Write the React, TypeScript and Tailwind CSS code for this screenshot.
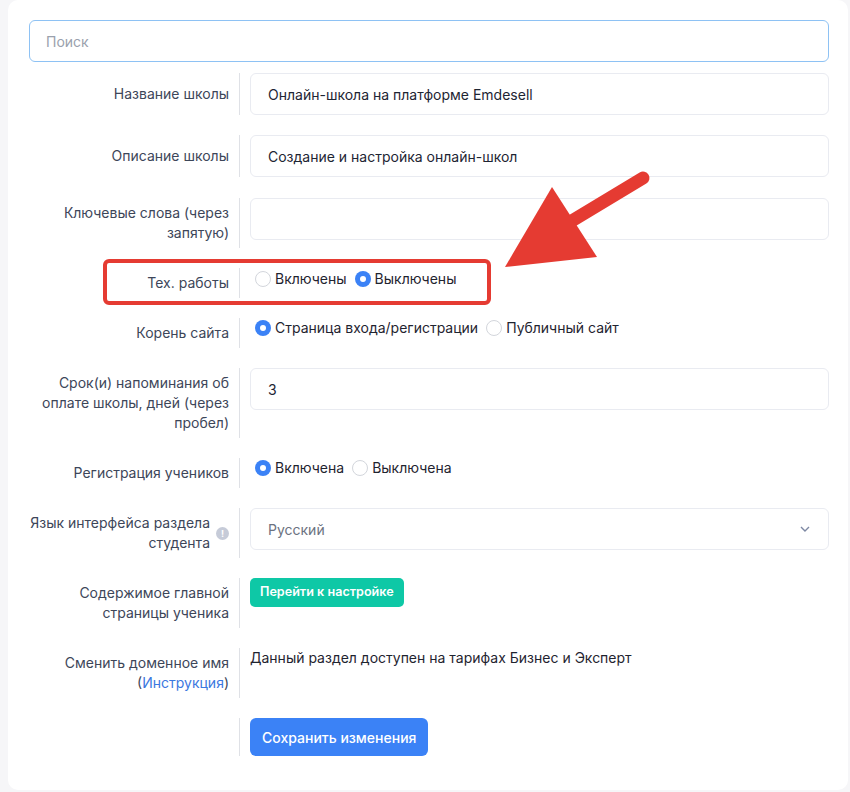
import { ReactNode } from 'react';

function Row({
  label,
  children,
  fieldClass = 'pl-[10px]',
  className = 'mt-5',
}: {
  label?: ReactNode;
  children: ReactNode;
  fieldClass?: string;
  className?: string;
}) {
  return (
    <div className={`flex ${className}`}>
      <div className="w-[211px] shrink-0 min-h-[30px] border-r border-[#dfe1e6] pr-[10px] py-[5px] flex items-center justify-end text-right text-[14px] leading-[20px] text-[#3d4659]">
        {label}
      </div>
      <div className={`flex-1 ${fieldClass}`}>{children}</div>
    </div>
  );
}

function TextField({ value }: { value: string }) {
  return (
    <div className="h-[42px] rounded-md border border-[#e9ebf1] bg-white px-[17px] flex items-center text-[14px] text-[#1e2533]">
      {value}
    </div>
  );
}

function Radio({ checked, label }: { checked?: boolean; label: string }) {
  return (
    <span className="flex items-center gap-[4px] mr-[8px] h-[20px]">
      {checked ? (
        <span className="w-[16px] h-[16px] rounded-full bg-[#3b82f6] flex items-center justify-center">
          <span className="w-[6px] h-[6px] rounded-full bg-white" />
        </span>
      ) : (
        <span className="w-[16px] h-[16px] rounded-full border border-[#d3d6dc] bg-white" />
      )}
      <span className="text-[14px] leading-[20px] text-[#1f2430]">{label}</span>
    </span>
  );
}

export default function App() {
  return (
    <div
      className="relative min-h-[792px] bg-[#f6f6f8] pl-2 pr-[2px] pb-[2px]"
      style={{ fontFamily: 'Inter, "Noto Sans", sans-serif' }}
    >
      <div className="bg-white rounded-[10px] pl-[21px] pr-[19px] pt-5 pb-[34px] min-h-[790px]">
        <div className="h-[42px] rounded-md border border-[#8ec2f4] flex items-center px-4 text-[14px] text-[#9aa1ad] mb-[11px]">
          Поиск
        </div>

        <Row label="Название школы" className="">
          <TextField value="Онлайн-школа на платформе Emdesell" />
        </Row>
        <Row label="Описание школы">
          <TextField value="Создание и настройка онлайн-школ" />
        </Row>
        <Row label="Ключевые слова (через запятую)" className="mt-[21px]">
          <TextField value="" />
        </Row>
        <Row label="Тех. работы" fieldClass="flex items-start pt-[1px] pl-[15px]">
          <Radio label="Включены" />
          <Radio checked label="Выключены" />
        </Row>
        <Row label="Корень сайта" fieldClass="flex items-start pl-[15px]">
          <Radio checked label="Страница входа/регистрации" />
          <Radio label="Публичный сайт" />
        </Row>
        <Row label="Срок(и) напоминания об оплате школы, дней (через пробел)">
          <TextField value="3" />
        </Row>
        <Row label="Регистрация учеников" fieldClass="flex items-start pl-[15px]">
          <Radio checked label="Включена" />
          <Radio label="Выключена" />
        </Row>
        <Row
          label={
            <span className="flex items-center gap-[6px]">
              <span>
                Язык интерфейса раздела
                <br />
                студента
              </span>
              <span className="w-[13px] h-[13px] rounded-full bg-[#c6cbd8] text-white text-[9px] font-bold leading-none flex items-center justify-center">
                !
              </span>
            </span>
          }
        >
          <div className="h-[42px] rounded-md border border-[#e9ebf1] bg-white pl-[17px] pr-[18px] flex items-center justify-between text-[14px] text-[#6b7280]">
            <span>Русский</span>
            <svg width="10" height="6" viewBox="0 0 10 6" fill="none">
              <path d="M1 1l4 4 4-4" stroke="#7d88a3" strokeWidth="1.4" />
            </svg>
          </div>
        </Row>
        <Row label="Содержимое главной страницы ученика">
          <button className="h-[29px] px-[10px] rounded-[5px] bg-[#0ec8a6] text-white text-[12.6px] font-semibold">
            Перейти к настройке
          </button>
        </Row>
        <Row
          label={
            <span>
              Сменить доменное имя
              <br />(<span className="text-[#3b78e0]">Инструкция</span>)
            </span>
          }
        >
          <div className="text-[14px] leading-[20px] text-[#1f2430]">
            Данный раздел доступен на тарифах Бизнес и Эксперт
          </div>
        </Row>
        <Row label="">
          <button className="h-[38px] px-[12px] rounded-md bg-[#3b82f6] text-white text-[14px] font-medium">
            Сохранить изменения
          </button>
        </Row>
      </div>

      <div className="absolute left-[103px] top-[259px] w-[388px] h-[46px] border-4 border-[#e53b32] rounded-[6px] pointer-events-none" />
      <svg
        className="absolute left-0 top-0 pointer-events-none"
        width="850"
        height="792"
        viewBox="0 0 850 792"
      >
        <line x1="643" y1="178" x2="570" y2="222" stroke="#e53b32" strokeWidth="13" strokeLinecap="round" />
        <polygon points="505,267 552,187 597,257" fill="#e53b32" />
      </svg>
    </div>
  );
}
